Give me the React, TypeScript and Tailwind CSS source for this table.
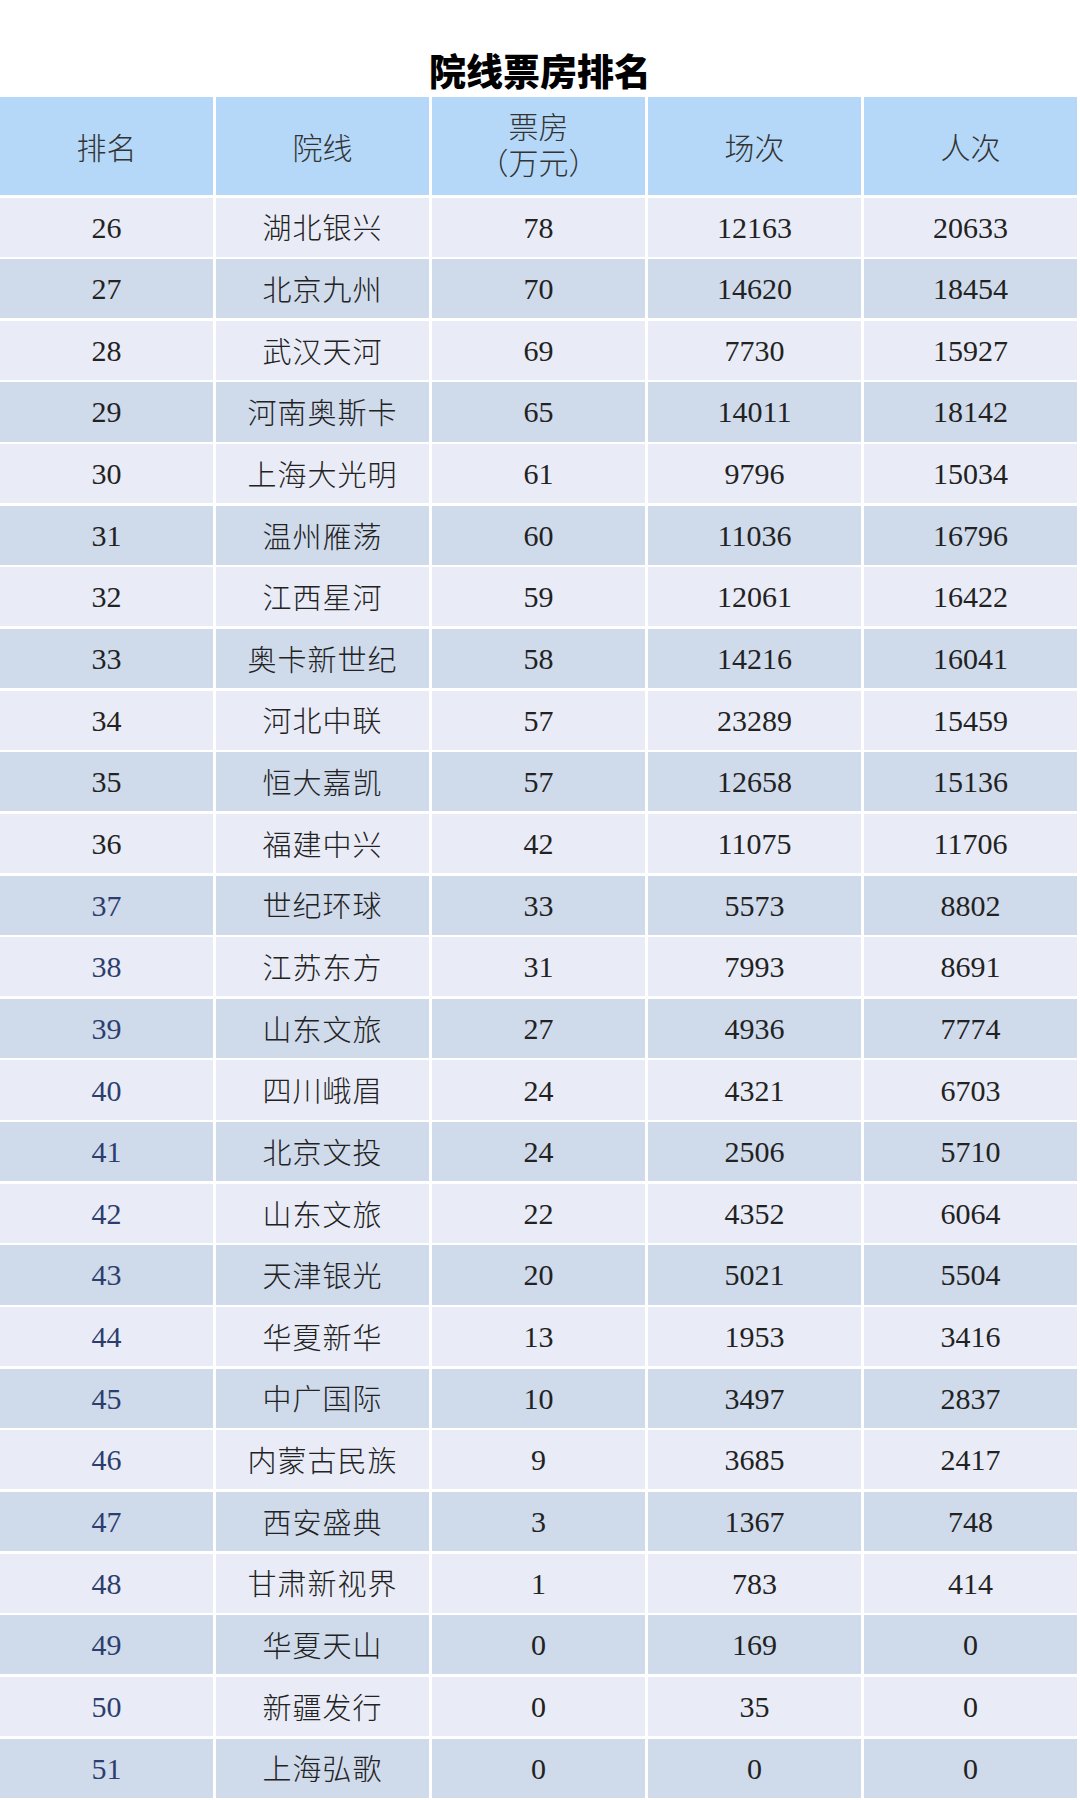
const rows: [number, string, number, number, number][] = [
  [26, "湖北银兴", 78, 12163, 20633],
  [27, "北京九州", 70, 14620, 18454],
  [28, "武汉天河", 69, 7730, 15927],
  [29, "河南奥斯卡", 65, 14011, 18142],
  [30, "上海大光明", 61, 9796, 15034],
  [31, "温州雁荡", 60, 11036, 16796],
  [32, "江西星河", 59, 12061, 16422],
  [33, "奥卡新世纪", 58, 14216, 16041],
  [34, "河北中联", 57, 23289, 15459],
  [35, "恒大嘉凯", 57, 12658, 15136],
  [36, "福建中兴", 42, 11075, 11706],
  [37, "世纪环球", 33, 5573, 8802],
  [38, "江苏东方", 31, 7993, 8691],
  [39, "山东文旅", 27, 4936, 7774],
  [40, "四川峨眉", 24, 4321, 6703],
  [41, "北京文投", 24, 2506, 5710],
  [42, "山东文旅", 22, 4352, 6064],
  [43, "天津银光", 20, 5021, 5504],
  [44, "华夏新华", 13, 1953, 3416],
  [45, "中广国际", 10, 3497, 2837],
  [46, "内蒙古民族", 9, 3685, 2417],
  [47, "西安盛典", 3, 1367, 748],
  [48, "甘肃新视界", 1, 783, 414],
  [49, "华夏天山", 0, 169, 0],
  [50, "新疆发行", 0, 35, 0],
  [51, "上海弘歌", 0, 0, 0],
];

const cellFont = "font-['Liberation_Serif','Noto_Sans_CJK_SC',serif]";

export default function App() {
  return (
    <div className="w-[1080px] h-[1800px] overflow-hidden bg-white">
      {/* title */}
      <div className="h-[97px] flex items-end justify-center pb-[8px]">
        <h1 className="text-[37px] leading-none font-black text-black font-['Noto_Sans_CJK_SC',sans-serif]">
          院线票房排名
        </h1>
      </div>

      <div className={`grid grid-cols-5 gap-x-[3px] gap-y-[2.5px] w-[1077px] text-[30px] text-[#222] ${cellFont}`}>
        {/* header */}
        {["排名", "院线", "票房", "场次", "人次"].map((h, i) => (
          <div
            key={h}
            className={`h-[98px] bg-[#b5d8f8] flex flex-col items-center justify-center text-center text-[#333] font-light ${
              i === 2 ? "" : "font-['Noto_Sans_CJK_SC',sans-serif]"
            }`}
          >
            {i === 2 ? (
              <>
                <div className="leading-[36px]">票房</div>
                <div className="leading-[36px]">（万元）</div>
              </>
            ) : (
              <span>{h}</span>
            )}
          </div>
        ))}

        {rows.map((r, idx) => {
          const bg = idx % 2 === 0 ? "bg-[#e9ecf6]" : "bg-[#cfdaeb]";
          return r.map((v, c) => (
            <div
              key={`${r[0]}-${c}`}
              className={`h-[59.15px] ${bg} flex items-center justify-center ${
                c === 0 && r[0] >= 37 ? "text-[#2c3e6e]" : ""
              } ${c === 1 ? "font-['Noto_Sans_CJK_SC',sans-serif] font-light text-[29px] tracking-[1px]" : ""}`}
            >
              {v}
            </div>
          ));
        })}
      </div>
    </div>
  );
}
